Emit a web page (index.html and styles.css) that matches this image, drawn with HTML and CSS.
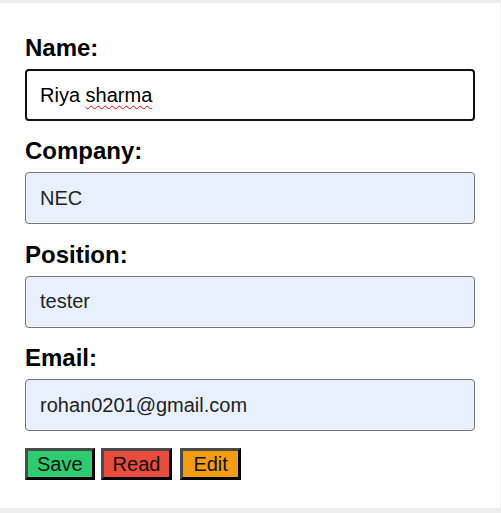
FILE: index.html
```html
<!DOCTYPE html>
<html>
<head>
<meta charset="utf-8">
<link rel="stylesheet" href="styles.css">
</head>
<body>
<div class="card">
  <div class="field">
    <label class="label">Name:</label>
    <div class="input focused"><span class="spell">Riya <u class="wavy">sharma</u></span></div>
  </div>
  <div class="field">
    <label class="label">Company:</label>
    <div class="input filled">NEC</div>
  </div>
  <div class="field">
    <label class="label">Position:</label>
    <div class="input filled">tester</div>
  </div>
  <div class="field">
    <label class="label">Email:</label>
    <div class="input filled">rohan0201@gmail.com</div>
  </div>
  <div class="actions">
    <button class="btn save">Save</button>
    <button class="btn read">Read</button>
    <button class="btn edit">Edit</button>
  </div>
</div>
</body>
</html>
```
FILE: styles.css
```css
html, body {
  margin: 0;
  padding: 0;
}
body {
  background: #eeeeee;
  padding-top: 3px;
  font-family: "Liberation Sans", Arial, sans-serif;
  height: 513px;
  box-sizing: border-box;
}
.card {
  background: #ffffff;
  width: 500px;
  height: 505px;
  box-sizing: border-box;
  padding: 31px 25px 0 25px;
}
.field {
  display: flex;
  flex-direction: column;
  margin-bottom: 16.4px;
}
.label {
  font-size: 24px;
  font-weight: bold;
  line-height: 28px;
  color: #000;
  margin-bottom: 7px;
}
.input {
  height: 52px;
  box-sizing: border-box;
  border: 1px solid #767676;
  border-radius: 4px;
  padding: 0 14px;
  display: flex;
  align-items: center;
  font-size: 20px;
  color: #222;
  width: 450px;
}
.filled {
  background: #e8f0fe;
}
.focused {
  border: 2px solid #111;
  padding: 0 13px;
  background: #fff;
  color: #000;
}
.wavy {
  text-decoration: underline wavy #e00000;
  text-decoration-thickness: 1px;
  text-underline-offset: 3px;
}
.actions {
  display: flex;
  gap: 6px;
}
.btn {
  font-family: "Liberation Sans", Arial, sans-serif;
  font-size: 20px;
  height: 32px;
  padding: 0 9px;
  color: #111;
  border-style: solid;
  border-width: 3px;
  border-color: #4a4a4a #000 #000 #4a4a4a;
  border-radius: 0;
  line-height: 26px;
}
.save { background: #2ecc71; }
.read { background: #e74c3c; }
.edit { background: #f39c12; margin-left: 2px; padding: 0 10px; }
```
